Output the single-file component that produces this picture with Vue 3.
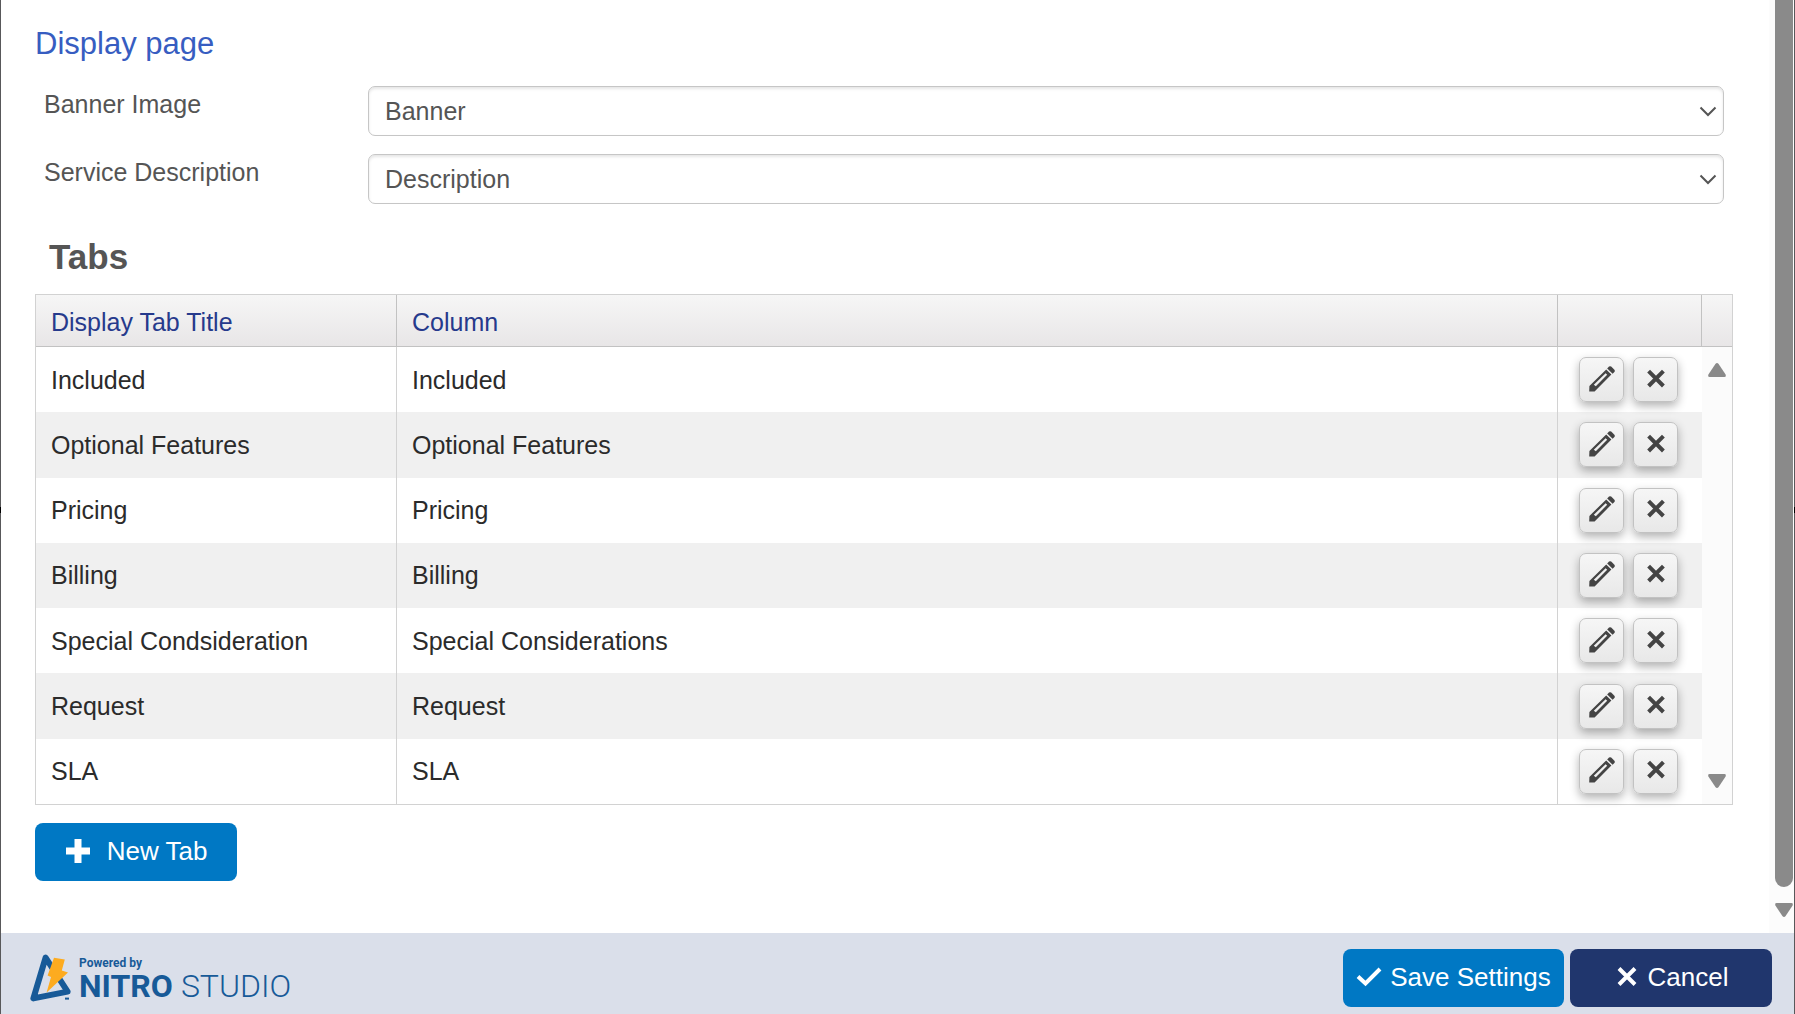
<script setup>
import { ref } from 'vue'

const banner = ref('Banner')
const description = ref('Description')

const tabs = ref([
  { title: 'Included', column: 'Included' },
  { title: 'Optional Features', column: 'Optional Features' },
  { title: 'Pricing', column: 'Pricing' },
  { title: 'Billing', column: 'Billing' },
  { title: 'Special Condsideration', column: 'Special Considerations' },
  { title: 'Request', column: 'Request' },
  { title: 'SLA', column: 'SLA' },
])
</script>

<template>
  <div class="page">
    <div class="body">
      <main class="content">
        <h2 class="section-title">Display page</h2>

        <div class="fields">
          <div class="field">
            <label for="banner-image">Banner Image</label>
            <div class="select-box">
              <select id="banner-image" v-model="banner">
                <option>Banner</option>
              </select>
              <svg class="chevron" viewBox="0 0 18 12" aria-hidden="true"><path d="M1.5 1.5 L9 9 L16.5 1.5" /></svg>
            </div>
          </div>
          <div class="field">
            <label for="service-description">Service Description</label>
            <div class="select-box">
              <select id="service-description" v-model="description">
                <option>Description</option>
              </select>
              <svg class="chevron" viewBox="0 0 18 12" aria-hidden="true"><path d="M1.5 1.5 L9 9 L16.5 1.5" /></svg>
            </div>
          </div>
        </div>

        <h3 class="tabs-title">Tabs</h3>

        <table class="grid">
          <colgroup>
            <col class="col-title" />
            <col />
            <col class="col-actions" />
            <col class="col-scroll" />
          </colgroup>
          <thead>
            <tr>
              <th scope="col">Display Tab Title</th>
              <th scope="col">Column</th>
              <th></th>
              <th></th>
            </tr>
          </thead>
          <tbody>
            <tr v-for="(tab, i) in tabs" :key="tab.title">
              <td>{{ tab.title }}</td>
              <td>{{ tab.column }}</td>
              <td class="actions">
                <div class="action-row">
                  <button type="button" class="icon-button" aria-label="Edit">
                    <svg viewBox="0 0 26 26" aria-hidden="true">
                      <path fill-rule="evenodd" d="M0.2 25.4 L0.4 20 L17.2 3.4 L22.4 8.6 L5.6 25.4 Z M4.8 18.8 L6.8 20.2 L18.2 8.8 L16.6 7.2 Z" />
                      <path d="M18.2 2.4 L20 0.6 Q21 -0.2 22.2 0.6 L25.4 3.8 Q26.2 5 25.4 6 L23.6 7.8 Z" />
                    </svg>
                  </button>
                  <button type="button" class="icon-button" aria-label="Delete">
                    <svg viewBox="0 0 26 26" aria-hidden="true">
                      <path class="cross" d="M5.6 5.2 L20.4 20 M20.4 5.2 L5.6 20" />
                    </svg>
                  </button>
                </div>
              </td>
              <td v-if="i === 0" class="scroll-cell" :rowspan="tabs.length" aria-hidden="true">
                <svg class="arrow-up" viewBox="0 0 18 14"><path d="M7.4 1 Q9 -1 10.6 1 L17.6 11.4 Q18.4 14 16.4 14 H1.6 Q-0.4 14 0.4 11.4 Z" /></svg>
                <svg class="arrow-down" viewBox="0 0 18 14"><path d="M7.4 13 Q9 15 10.6 13 L17.6 2.6 Q18.4 0 16.4 0 H1.6 Q-0.4 0 0.4 2.6 Z" /></svg>
              </td>
            </tr>
          </tbody>
        </table>

        <button type="button" class="button primary new-tab">
          <svg viewBox="0 0 26 26" aria-hidden="true">
            <path fill="currentColor" d="M9.5 1 h7 v8.5 h8.5 v7 h-8.5 v8.5 h-7 v-8.5 h-8.5 v-7 h8.5 z" />
          </svg>
          New Tab
        </button>
      </main>

      <div class="scrollbar" aria-hidden="true">
        <div class="thumb"></div>
        <svg viewBox="0 0 18 14"><path d="M7.4 13 Q9 15 10.6 13 L17.6 2.6 Q18.4 0 16.4 0 H1.6 Q-0.4 0 0.4 2.6 Z" /></svg>
      </div>
    </div>

    <footer class="footer">
      <div class="brand">
        <svg class="mark" viewBox="0 0 42 48" aria-hidden="true">
          <path class="triangle" d="M15.6 3.6 L3.4 44.4 L37.6 37.6 Z" />
          <path class="bolt" d="M24 3.8 L34.8 5.6 L31.8 16.4 L38 18.4 L16.6 38.6 L21 23 L17.6 21.4 Z" />
          <path class="trademark" d="M35 43.6 h4 v2 h-4 z" />
        </svg>
        <div class="brand-text">
          <span class="powered">Powered by</span>
          <span class="name"><b>NITRO</b><span>STUDIO</span></span>
        </div>
      </div>
      <div class="footer-actions">
        <button type="button" class="button primary save">
          <svg viewBox="0 0 26 26" aria-hidden="true">
            <path class="tick" d="M2 12.5 L9.5 19.5 L24 5" />
          </svg>
          Save Settings
        </button>
        <button type="button" class="button dark cancel">
          <svg viewBox="0 0 26 26" aria-hidden="true">
            <path class="cross" d="M5 4.5 L21 20.5 M21 4.5 L5 20.5" />
          </svg>
          Cancel
        </button>
      </div>
    </footer>
  </div>
</template>

<style>
body {
  margin: 0;
}
</style>

<style scoped>
.page {
  position: relative;
  box-sizing: border-box;
  display: flex;
  flex-direction: column;
  min-height: 100vh;
  border-left: 1px solid #58585a;
  border-right: 1px solid #58585a;
  background: #fff;
  font-family: "Liberation Sans", Arial, sans-serif;
  font-size: 25px;
  line-height: 28px;
  color: #2b2b2b;
}

.page::before,
.page::after {
  content: "";
  position: absolute;
  top: 50%;
  width: 1px;
  height: 6px;
  background: #000;
}

.page::before {
  left: -1px;
}

.page::after {
  right: -1px;
}

.body {
  flex: 1;
  display: flex;
}

.content {
  flex: 1;
  min-width: 0;
  padding: 26px 36px 52px 34px;
}

.section-title {
  margin: 0 0 24px;
  font-size: 31px;
  line-height: 36px;
  font-weight: 400;
  color: #375dc1;
}

.fields {
  display: flex;
  flex-direction: column;
  gap: 18px;
  padding: 0 9px;
}

.field {
  display: flex;
  align-items: flex-start;
  color: #555;
}

.field label {
  width: 324px;
  flex: none;
  padding-top: 4px;
}

.select-box {
  position: relative;
  flex: 1;
}

.select-box select {
  display: block;
  box-sizing: border-box;
  width: 100%;
  height: 50px;
  padding: 0 40px 0 16px;
  appearance: none;
  border: 1px solid #c6c6c6;
  border-radius: 7px;
  background: #fff;
  box-shadow: inset 0 2px 3px rgba(0, 0, 0, 0.1);
  font: inherit;
  color: #555;
}

.chevron {
  position: absolute;
  top: 20px;
  right: 7px;
  width: 18px;
  height: 12px;
  fill: none;
  stroke: #555;
  stroke-width: 2;
  pointer-events: none;
}

.tabs-title {
  margin: 33px 0 17px 14px;
  font-size: 35px;
  line-height: 40px;
  font-weight: 700;
  color: #555;
}

.grid {
  width: 100%;
  height: 511px;
  table-layout: fixed;
  border-collapse: separate;
  border-spacing: 0;
  border: 1px solid #d2d2d2;
}

.col-title {
  width: 361px;
}

.col-actions {
  width: 144px;
}

.col-scroll {
  width: 30px;
}

.grid th {
  box-sizing: border-box;
  height: 52px;
  padding: 2px 15px 0;
  border-right: 1px solid #c2c2c2;
  border-bottom: 1px solid #c2c2c2;
  background: linear-gradient(#f6f6f6, #e8e6e7);
  text-align: left;
  font-weight: 400;
  color: #263a8c;
}

.grid th:last-child {
  border-right: 0;
}

.grid td {
  height: 65px;
  padding: 0 15px;
  border-right: 1px solid #d2d2d2;
}

.grid tbody tr:nth-child(even) td {
  background: #f0f0f0;
}

.grid td.actions {
  padding: 0 0 0 21px;
  border-right: 0;
}

.action-row {
  display: flex;
  gap: 9px;
}

.icon-button {
  display: flex;
  align-items: center;
  justify-content: center;
  box-sizing: border-box;
  width: 45px;
  height: 45px;
  padding: 0 0 2px;
  border: 1px solid #c2c2c2;
  border-radius: 7px;
  background: linear-gradient(#f6f6f6, #e8e8e8);
  box-shadow: 0 4px 10px rgba(0, 0, 0, 0.3);
  color: #444;
}

.icon-button svg {
  width: 26px;
  height: 26px;
  fill: currentColor;
}

.cross {
  fill: none;
  stroke: currentColor;
  stroke-width: 4;
}

.grid td.scroll-cell {
  position: relative;
  padding: 0;
  border-right: 0;
  background: #fbfbfb;
}

.scroll-cell svg {
  position: absolute;
  left: 6px;
  width: 18px;
  height: 14px;
  fill: #8a8a8a;
}

.arrow-up {
  top: 16px;
}

.arrow-down {
  bottom: 16px;
}

.button {
  display: inline-flex;
  align-items: center;
  justify-content: center;
  box-sizing: border-box;
  height: 58px;
  padding: 0 0 2px;
  border: 0;
  border-radius: 8px;
  font: inherit;
  font-size: 26px;
  color: #fff;
}

.button svg {
  width: 26px;
  height: 26px;
}

.primary {
  background: #0078c4;
}

.dark {
  background: #20366d;
}

.new-tab {
  display: flex;
  gap: 16px;
  width: 202px;
  margin-top: 18px;
}

.save {
  gap: 8px;
  width: 221px;
}

.cancel {
  gap: 8px;
  width: 202px;
}

.tick {
  fill: none;
  stroke: currentColor;
  stroke-width: 4;
}

.scrollbar {
  display: flex;
  flex-direction: column;
  align-items: center;
  box-sizing: border-box;
  width: 25px;
  padding: 0 1px 16px 6px;
  background: #fcfcfc;
}

.thumb {
  flex: 1;
  width: 18px;
  margin-bottom: 16px;
  border-radius: 0 0 9px 9px;
  background: #8a8a8a;
}

.scrollbar svg {
  width: 18px;
  height: 14px;
  fill: #8a8a8a;
}

.footer {
  display: flex;
  align-items: flex-start;
  justify-content: space-between;
  padding: 16px 22px 7px 29px;
  background: #dadfea;
}

.brand {
  display: flex;
  gap: 7px;
  padding-top: 5px;
  font-family: Roboto, sans-serif;
  color: #175a98;
}

.mark {
  width: 42px;
  height: 48px;
}

.triangle {
  fill: none;
  stroke: #175a98;
  stroke-width: 6;
  stroke-linejoin: round;
}

.trademark {
  fill: #175a98;
}

.bolt {
  fill: #fdab1f;
}

.brand-text {
  display: flex;
  flex-direction: column;
  padding-top: 1px;
}

.powered {
  font-size: 12px;
  line-height: 16px;
  font-weight: 700;
}

.name {
  display: flex;
  gap: 8px;
  font-size: 32px;
  line-height: 30px;
  font-weight: 300;
}

.name b {
  font-weight: 700;
}

.footer-actions {
  display: flex;
  gap: 6px;
}
</style>
